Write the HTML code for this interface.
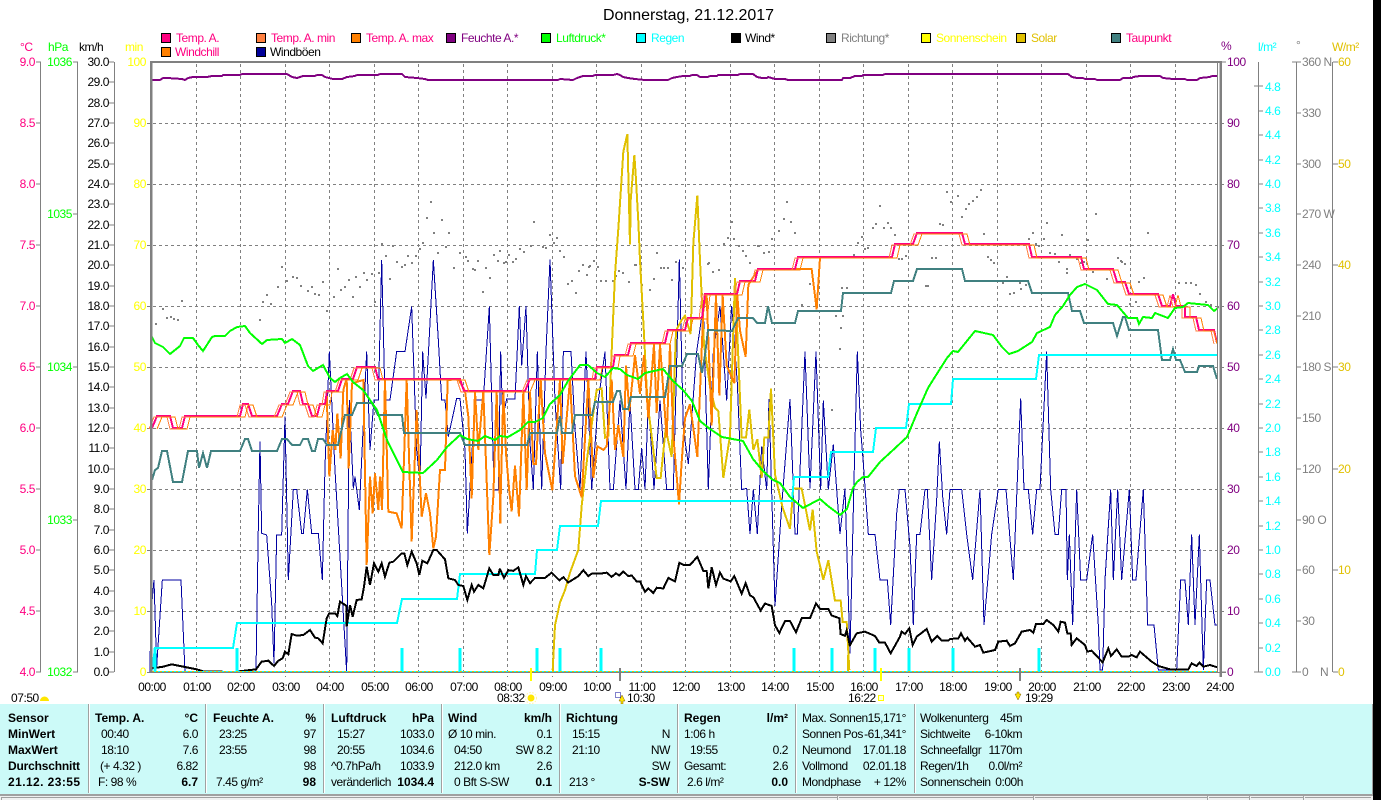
<!DOCTYPE html>
<html><head><meta charset="utf-8"><title>Donnerstag, 21.12.2017</title>
<style>
html,body{margin:0;padding:0;background:#fff;width:1381px;height:800px;overflow:hidden}
svg{display:block;position:absolute;left:0;top:0}
text{font-family:"Liberation Sans",sans-serif;font-size:12px;letter-spacing:-.45px;fill:#000}
.b text,text.b{font-weight:bold;letter-spacing:0}
.r text,text.r{text-anchor:end}
.l{fill:none;shape-rendering:crispEdges;vector-effect:non-scaling-stroke}
.l *{vector-effect:non-scaling-stroke}
</style></head><body>
<svg width="1381" height="800" viewBox="0 0 1381 800" xmlns="http://www.w3.org/2000/svg">
<rect width="1381" height="800" fill="#fff"/>
<rect x="1373" width="8" height="800" fill="#000"/>

<text x="603" y="20" style="font-size:16px;letter-spacing:0" textLength="171">Donnerstag, 21.12.2017</text>

<!-- legend -->
<g stroke="#000" shape-rendering="crispEdges">
<rect x="161.5" y="33.5" width="9" height="9" fill="#FF0080"/>
<rect x="256.5" y="33.5" width="9" height="9" fill="#FF8040"/>
<rect x="351.5" y="33.5" width="9" height="9" fill="#FF8000"/>
<rect x="446.5" y="33.5" width="9" height="9" fill="#800080"/>
<rect x="541.5" y="33.5" width="9" height="9" fill="#00FF00"/>
<rect x="636.5" y="33.5" width="9" height="9" fill="#00FFFF"/>
<rect x="731.5" y="33.5" width="9" height="9" fill="#000"/>
<rect x="826.5" y="33.5" width="9" height="9" fill="#808080"/>
<rect x="921.5" y="33.5" width="9" height="9" fill="#FFFF00"/>
<rect x="1016.5" y="33.5" width="9" height="9" fill="#E0C000"/>
<rect x="1111.5" y="33.5" width="9" height="9" fill="#408080"/>
<rect x="161.5" y="47.5" width="9" height="9" fill="#FF8000"/>
<rect x="256.5" y="47.5" width="9" height="9" fill="#000099"/>
</g>
<g>
<text x="176" y="42" style="fill:#FF0080">Temp. A.</text>
<text x="271" y="42" style="fill:#FF0080">Temp. A. min</text>
<text x="366" y="42" style="fill:#FF0080">Temp. A. max</text>
<text x="461" y="42" style="fill:#800080">Feuchte A.*</text>
<text x="556" y="42" style="fill:#00FF00">Luftdruck*</text>
<text x="651" y="42" style="fill:#00FFFF">Regen</text>
<text x="745" y="42">Wind*</text>
<text x="841" y="42" style="fill:#808080">Richtung*</text>
<text x="936" y="42" style="fill:#FFFF00">Sonnenschein</text>
<text x="1031" y="42" style="fill:#E0C000">Solar</text>
<text x="1126" y="42" style="fill:#FF0080">Taupunkt</text>
<text x="175" y="56" style="fill:#FF0080">Windchill</text>
<text x="270" y="56">Windböen</text>
</g>

<!-- left axis headers -->
<text x="20" y="51" style="fill:#FF0080">°C</text>
<text x="48" y="51" style="fill:#00FF00">hPa</text>
<text x="79" y="51">km/h</text>
<text x="125" y="51" style="fill:#FFFF00">min</text>
<text x="1221" y="50" style="fill:#800080">%</text>
<text x="1258" y="51" style="fill:#00FFFF">l/m²</text>
<text x="1296" y="49" style="fill:#808080">°</text>
<text x="1332" y="51" style="fill:#E0C000">W/m²</text>

<!-- axis lines + ticks -->
<g class="l" stroke="#808080" stroke-width="1">
<path d="M40.5 62V672M77.5 62V672M114.5 62V672M1258.5 62V672M1296.5 62V672M1332.5 62V672"/>
<path d="M36 62h5M36 123h5M36 184h5M36 245h5M36 306h5M36 367h5M36 428h5M36 489h5M36 550h5M36 611h5M36 672h5"/>
<path d="M73 62h5M73 214h5M73 367h5M73 520h5M73 672h5"/>
<path d="M109 62h5M109 82h5M109 103h5M109 123h5M109 143h5M109 164h5M109 184h5M109 204h5M109 225h5M109 245h5M109 265h5M109 286h5M109 306h5M109 326h5M109 347h5M109 367h5M109 387h5M109 408h5M109 428h5M109 448h5M109 469h5M109 489h5M109 509h5M109 530h5M109 550h5M109 570h5M109 591h5M109 611h5M109 631h5M109 652h5M109 672h5"/>
<path d="M1254 86h9M1258 111h5M1258 135h5M1258 160h5M1258 184h5M1258 208h5M1258 233h5M1258 257h5M1258 282h5M1258 306h5M1258 330h5M1258 355h5M1258 379h5M1258 404h5M1258 428h5M1258 452h5M1258 477h5M1258 501h5M1258 526h5M1258 550h5M1258 574h5M1258 599h5M1258 623h5M1258 648h5M1254 672h9"/>
<path d="M1292 62h9M1296 113h5M1296 164h5M1296 214h5M1296 265h5M1296 316h5M1296 367h5M1296 418h5M1296 469h5M1296 520h5M1296 570h5M1296 621h5M1292 672h9"/>
<path d="M1333 62h5M1333 164h5M1333 265h5M1333 367h5M1333 469h5M1333 570h5M1333 672h5"/>
<path d="M1220 62h6M1220 672h6"/>
</g>

<!-- axis labels -->
<g class="r" style="fill:#FF0080">
<text x="35" y="66" style="fill:#FF0080">9.0</text><text x="35" y="127" style="fill:#FF0080">8.5</text><text x="35" y="188" style="fill:#FF0080">8.0</text><text x="35" y="249" style="fill:#FF0080">7.5</text><text x="35" y="310" style="fill:#FF0080">7.0</text><text x="35" y="371" style="fill:#FF0080">6.5</text><text x="35" y="432" style="fill:#FF0080">6.0</text><text x="35" y="493" style="fill:#FF0080">5.5</text><text x="35" y="554" style="fill:#FF0080">5.0</text><text x="35" y="615" style="fill:#FF0080">4.5</text><text x="35" y="676" style="fill:#FF0080">4.0</text>
<text x="72" y="66" style="fill:#00FF00">1036</text><text x="72" y="218" style="fill:#00FF00">1035</text><text x="72" y="371" style="fill:#00FF00">1034</text><text x="72" y="524" style="fill:#00FF00">1033</text><text x="72" y="676" style="fill:#00FF00">1032</text>
<text x="109" y="66">30.0</text><text x="109" y="86">29.0</text><text x="109" y="107">28.0</text><text x="109" y="127">27.0</text><text x="109" y="147">26.0</text><text x="109" y="168">25.0</text><text x="109" y="188">24.0</text><text x="109" y="208">23.0</text><text x="109" y="229">22.0</text><text x="109" y="249">21.0</text><text x="109" y="269">20.0</text><text x="109" y="290">19.0</text><text x="109" y="310">18.0</text><text x="109" y="330">17.0</text><text x="109" y="351">16.0</text><text x="109" y="371">15.0</text><text x="109" y="391">14.0</text><text x="109" y="412">13.0</text><text x="109" y="432">12.0</text><text x="109" y="452">11.0</text><text x="109" y="473">10.0</text><text x="109" y="493">9.0</text><text x="109" y="513">8.0</text><text x="109" y="534">7.0</text><text x="109" y="554">6.0</text><text x="109" y="574">5.0</text><text x="109" y="595">4.0</text><text x="109" y="615">3.0</text><text x="109" y="635">2.0</text><text x="109" y="656">1.0</text><text x="109" y="676">0.0</text>
<text x="146" y="66" style="fill:#FFFF00">100</text><text x="146" y="127" style="fill:#FFFF00">90</text><text x="146" y="188" style="fill:#FFFF00">80</text><text x="146" y="249" style="fill:#FFFF00">70</text><text x="146" y="310" style="fill:#FFFF00">60</text><text x="146" y="371" style="fill:#FFFF00">50</text><text x="146" y="432" style="fill:#FFFF00">40</text><text x="146" y="493" style="fill:#FFFF00">30</text><text x="146" y="554" style="fill:#FFFF00">20</text><text x="146" y="615" style="fill:#FFFF00">10</text><text x="146" y="676" style="fill:#FFFF00">0</text>
</g>
<g style="fill:#800080">
<text x="1227" y="66" style="fill:#800080">100</text><text x="1227" y="127" style="fill:#800080">90</text><text x="1227" y="188" style="fill:#800080">80</text><text x="1227" y="249" style="fill:#800080">70</text><text x="1227" y="310" style="fill:#800080">60</text><text x="1227" y="371" style="fill:#800080">50</text><text x="1227" y="432" style="fill:#800080">40</text><text x="1227" y="493" style="fill:#800080">30</text><text x="1227" y="554" style="fill:#800080">20</text><text x="1227" y="615" style="fill:#800080">10</text><text x="1227" y="676" style="fill:#800080">0</text>
</g>
<g>
<text x="1265" y="91" style="fill:#00FFFF">4.8</text><text x="1265" y="115" style="fill:#00FFFF">4.6</text><text x="1265" y="139" style="fill:#00FFFF">4.4</text><text x="1265" y="164" style="fill:#00FFFF">4.2</text><text x="1265" y="188" style="fill:#00FFFF">4.0</text><text x="1265" y="212" style="fill:#00FFFF">3.8</text><text x="1265" y="237" style="fill:#00FFFF">3.6</text><text x="1265" y="261" style="fill:#00FFFF">3.4</text><text x="1265" y="286" style="fill:#00FFFF">3.2</text><text x="1265" y="310" style="fill:#00FFFF">3.0</text><text x="1265" y="334" style="fill:#00FFFF">2.8</text><text x="1265" y="359" style="fill:#00FFFF">2.6</text><text x="1265" y="383" style="fill:#00FFFF">2.4</text><text x="1265" y="408" style="fill:#00FFFF">2.2</text><text x="1265" y="432" style="fill:#00FFFF">2.0</text><text x="1265" y="456" style="fill:#00FFFF">1.8</text><text x="1265" y="481" style="fill:#00FFFF">1.6</text><text x="1265" y="505" style="fill:#00FFFF">1.4</text><text x="1265" y="530" style="fill:#00FFFF">1.2</text><text x="1265" y="554" style="fill:#00FFFF">1.0</text><text x="1265" y="578" style="fill:#00FFFF">0.8</text><text x="1265" y="603" style="fill:#00FFFF">0.6</text><text x="1265" y="627" style="fill:#00FFFF">0.4</text><text x="1265" y="652" style="fill:#00FFFF">0.2</text><text x="1265" y="676" style="fill:#00FFFF">0.0</text>
<text x="1302" y="66" style="fill:#808080">360 N</text><text x="1302" y="117" style="fill:#808080">330</text><text x="1302" y="168" style="fill:#808080">300</text><text x="1302" y="218" style="fill:#808080">270 W</text><text x="1302" y="269" style="fill:#808080">240</text><text x="1302" y="320" style="fill:#808080">210</text><text x="1302" y="371" style="fill:#808080">180 S</text><text x="1302" y="422" style="fill:#808080">150</text><text x="1302" y="473" style="fill:#808080">120</text><text x="1302" y="524" style="fill:#808080">90 O</text><text x="1302" y="574" style="fill:#808080">60</text><text x="1302" y="625" style="fill:#808080">30</text><text x="1302" y="676" style="fill:#808080">0</text><text x="1320" y="676" style="fill:#808080">N</text>
<text x="1338" y="66" style="fill:#E0C000">60</text><text x="1338" y="168" style="fill:#E0C000">50</text><text x="1338" y="269" style="fill:#E0C000">40</text><text x="1338" y="371" style="fill:#E0C000">30</text><text x="1338" y="473" style="fill:#E0C000">20</text><text x="1338" y="574" style="fill:#E0C000">10</text><text x="1338" y="676" style="fill:#E0C000">0</text>
</g>

<!-- grid -->
<g class="l" stroke="#808080" stroke-width="1" stroke-dasharray="3 3">
<path d="M147 123.5H1226M147 184.5H1226M147 245.5H1226M147 306.5H1226M147 367.5H1226M147 428.5H1226M147 489.5H1226M147 550.5H1226M147 611.5H1226"/>
<path d="M196.5 64V677M240.5 64V677M285.5 64V677M329.5 64V677M374.5 64V677M418.5 64V677M463.5 64V677M507.5 64V677M552.5 64V677M596.5 64V677M641.5 64V677M685.5 64V677M730.5 64V677M774.5 64V677M819.5 64V677M863.5 64V677M908.5 64V677M952.5 64V677M997.5 64V677M1041.5 64V677M1086.5 64V677M1130.5 64V677M1175.5 64V677"/>
</g>

<!-- direction dots -->
<path class="l" stroke="#808080" stroke-width="2" d="M430 202h2M426 218h2M441 220h2M433 233h2M448 233h2M422 243h2M381 244h2M392 246h2M445 247h2M419 249h2M385 256h2M407 256h2M415 256h2M437 253h2M459 253h2M396 262h2M404 265h2M411 263h2M401 267h2M281 267h2M337 269h2M453 268h2M533 222h2M556 238h2M549 235h2M553 243h2M542 247h2M545 248h2M530 246h2M519 249h2M523 252h2M508 255h2M499 251h2M493 255h2M515 259h2M512 262h2M503 263h2M497 261h2M465 257h2M467 261h2M477 261h2M485 268h2M472 269h2M559 251h2M563 257h2M593 261h2M582 265h2M588 267h2M597 267h2M634 265h2M656 253h2M663 268h2M667 268h2M682 268h2M708 263h2M731 222h2M727 238h2M733 239h2M723 244h2M742 251h2M745 256h2M749 263h2M758 246h2M771 239h2M768 252h2M763 253h2M778 231h2M783 219h2M786 202h2M790 222h2M794 233h2M853 255h2M857 243h2M861 237h2M864 249h2M867 248h2M872 228h2M875 224h2M879 206h2M883 228h2M887 223h2M890 228h2M894 235h2M905 256h2M898 259h2M901 259h2M946 192h2M957 196h2M980 190h2M976 197h2M972 201h2M968 204h2M950 202h2M965 209h2M961 217h2M983 234h2M939 224h2M942 225h2M931 258h2M935 258h2M1032 233h2M1028 239h2M1043 239h2M1035 244h2M1038 246h2M1046 223h2M1061 235h2M1095 214h2M1147 233h2M1087 240h2M1049 253h2M1054 254h2M987 257h2M990 260h2M993 263h2M1069 255h2M1076 259h2M1058 262h2M1080 263h2M1083 262h2M1117 258h2M1121 262h2M1124 264h2M1066 269h2M925 286h2M927 286h2M1002 283h2M1006 277h2M1019 283h2M1025 285h2M1020 289h2M1013 293h2M1009 294h2M1106 279h2M1143 278h2M1138 282h2M1178 283h2M1185 283h2M1190 283h2M1195 285h2M1199 294h2M1129 304h2M1135 302h2M1205 302h2M1210 305h2M1217 307h2M1066 273h2M1081 263h2M1092 272h2M1120 261h2M155 324h2M162 309h2M166 318h2M170 317h2M173 319h2M177 320h2M181 301h2M259 320h2M262 302h2M266 295h2M270 304h2M277 287h2M286 281h2M292 277h2M296 278h2M300 286h2M307 291h2M311 287h2M314 294h2M318 295h2M322 282h2M326 311h2M333 297h2M340 290h2M344 287h2M348 280h2M352 297h2M355 277h2M359 287h2M363 273h2M366 280h2M371 274h2M374 302h2M378 273h2M389 279h2M474 270h2M489 278h2M482 292h2M505 262h2M567 284h2M571 281h2M575 293h2M578 271h2M586 275h2M589 266h2M600 281h2M605 281h2M612 281h2M615 276h2M618 271h2M622 273h2M628 282h2M635 265h2M641 285h2M649 290h2M653 279h2M660 268h2M671 280h2M675 262h2M701 294h2M707 264h2M712 272h2M718 270h2M738 246h2M757 246h2M801 305h2M809 284h2M841 288h2M835 316h2M842 316h2M840 328h2M839 349h2M831 410h2M846 288h2"/>

<!-- gusts -->
<g class="l" stroke="#0000A0" stroke-width="1">
<polyline transform="translate(150 250) scale(.33333)" points="0,1266 2,1100 12,990 20,1250 37,990 93,990 105,1266 318,1266 325,830 330,575 335,850 350,855 365,1060 372,1240 380,855 395,855 405,500 415,990 430,718 440,718 455,850 460,850 472,718 485,850 505,850 517,990 525,650 538,305 545,450 555,660 590,1266 598,450 610,715 615,680 628,780 650,305 660,600 672,450 685,450 695,30 705,450 720,450 740,305 765,305 785,170 800,600 810,700 818,305 828,445 850,30 865,270 875,450 885,450 895,560 920,445 930,445 945,600 952,850 975,450 1000,450 1018,170 1032,720 1045,720 1052,305"/>
<polyline transform="translate(500 120) scale(.33333 .35088)" points="2,660 8,850 20,795 45,795 58,530 65,700 78,530 90,920 100,1053 112,660 125,1053 138,660 150,397 165,800 182,1053 190,660 213,660 225,880 240,1053 258,660 275,1053 295,800 315,660 330,1053 340,1053 360,800 378,1053 390,800 405,1053 415,1053 425,935 435,1053 445,800 462,1053 480,800 500,1053 520,1053 538,397 550,880 565,980 590,660 610,530 625,1053 640,660 660,530 680,800 695,530 712,750 725,1053 740,1050 750,1180 760,1053 772,1180 785,930 800,1053 807,795 825,1385 845,1100 870,795 885,1180 892,1180 915,660 930,1050 948,660 962,1053 970,800 985,1053 1000,925 1020,1180 1035,1050 1050,1520"/>
<polyline transform="translate(850 180) scale(.33333)" points="0,1420 12,900 22,515 32,750 40,850 55,1063 75,1063 90,1200 112,1200 122,1335 140,1000 148,928 165,928 180,1100 190,1335 200,1063 210,1063 225,928 232,928 245,1200 260,960 268,785 278,950 290,1063 300,928 335,928 350,1063 368,1200 390,928 402,1335 425,1063 445,928 468,928 490,1200 500,950 512,655 522,928 535,928 548,1063 560,928 570,928 590,515 602,928 615,1063 625,1063 635,928 648,928 652,1200 658,1063 668,1335 680,928 692,1200 710,1200 728,1063 745,1335 750,1470 758,1470 765,1200 782,928 790,1200 803,928 815,1200 838,928 848,1200 858,1200 880,928 893,1335 912,1335 925,1470 980,1470 992,1200 1005,1200 1015,1335 1025,1063 1035,1335 1048,1063 1060,1470 1070,1200 1080,1200 1095,1335 1102,1335"/>
</g>

<!-- solar -->
<polyline class="l" stroke="#E0C000" stroke-width="2" transform="translate(500 120) scale(.33333 .35088)" points="158,1568 165,1440 180,1375 195,1340 210,1290 235,1225 245,1100 262,960 285,800 290,770 305,765 315,905 325,900 335,660 345,440 355,310 370,90 382,40 390,355 392,230 403,100 408,170 415,290 420,400 432,610 442,800 460,940 470,1020 482,1020 497,880 515,960 528,600 545,570 555,558 572,610 580,350 592,215 600,400 612,640 630,760 645,820 655,830 670,1020 690,900 705,450 725,905 738,905 748,825 760,940 772,910 785,1020 793,905 805,905 813,765 825,1010 848,1105 870,1165 880,1050 905,1050 930,1170 938,1110 950,1230 970,1310 985,1255 1005,1370 1022,1370 1028,1430 1040,1430 1048,1568"/>

<!-- windchill -->
<g class="l" stroke="#FF8000" stroke-width="2">
<polyline transform="translate(150 250) scale(.33333)" points="530,430 538,680 548,540 556,600 562,490 572,625 580,420 590,385 596,655 606,400 640,390 650,945 660,680 668,790 675,670 685,780 690,680 696,780 705,390 715,785 740,790 755,835 770,390 785,875 800,480 815,800 828,730 840,790 850,895 858,860 870,660 885,660 893,390 925,388 945,423 955,500 965,745 975,425 985,600 1000,425 1010,690 1018,915 1030,740 1040,425 1052,820"/>
<polyline transform="translate(500 120) scale(.33333 .35088)" points="0,1150 10,775 18,950 28,1060 35,1115 45,985 57,1130 70,775 80,1055 90,775 100,980 108,980 122,740 135,950 157,1055 180,740 188,980 210,740 225,1015 245,1075 265,740 280,1020 292,930 310,940 320,930 335,740 345,940 355,870 370,960 378,700 388,830 405,670 420,780 432,670 445,850 462,640 470,835 480,640 500,905 510,640 520,900 537,1095 545,975 555,850 570,810 592,960 610,540 620,500 635,870 648,500 658,785 668,500 680,700 703,750 712,500 720,600 737,675 745,470 775,425 885,425 935,425 950,540 960,392 1000,392"/>
</g>

<!-- temp -->
<polyline class="l" stroke="#FF0080" stroke-width="2" points="152,428 157,416 170,416 173,428 182,428 185,416 240,416 243,404 248,404 252,416 277,416 282,404 288,404 293,391 300,391 303,404 308,404 312,416 317,416 320,404 325,404 327,391 338,391 342,379 353,379 357,367 375,367 378,379 460,379 464,391 525,391 530,379 595,379 597,367 613,367 615,355 628,355 631,343 665,343 668,330 685,330 688,318 702,318 705,294 737,294 740,281 755,281 758,269 795,269 798,257 892,257 895,244 913,244 917,233 962,233 965,244 1029,244 1032,257 1081,257 1084,269 1113,269 1117,282 1125,282 1129,294 1158,294 1162,306 1170,306 1173,294 1176,306 1185,306 1185,317 1196,317 1199,330 1214,330 1217,343"/>

<!-- temp min/max thin -->
<g class="l" stroke-width="1" fill="none">
<polyline stroke="#FF8040" transform="translate(-3 1)" points="152,428 157,416 170,416 173,428 182,428 185,416 240,416 243,404 248,404 252,416 277,416 282,404 288,404 293,391 300,391 303,404 308,404 312,416 317,416 320,404 325,404 327,391 338,391 342,379 353,379 357,367 375,367 378,379 460,379 464,391 525,391 530,379 595,379 597,367 613,367 615,355 628,355 631,343 665,343 668,330 685,330 688,318 702,318 705,294 737,294 740,281 755,281 758,269 795,269 798,257 892,257 895,244 913,244 917,233 962,233 965,244 1029,244 1032,257 1081,257 1084,269 1113,269 1117,282 1125,282 1129,294 1158,294 1162,306 1170,306 1173,294 1176,306 1185,306 1185,317 1196,317 1199,330 1214,330 1217,343"/>
<polyline stroke="#FF8000" transform="translate(5 1)" points="152,428 157,416 170,416 173,428 182,428 185,416 240,416 243,404 248,404 252,416 277,416 282,404 288,404 293,391 300,391 303,404 308,404 312,416 317,416 320,404 325,404 327,391 338,391 342,379 353,379 357,367 375,367 378,379 460,379 464,391 525,391 530,379 595,379 597,367 613,367 615,355 628,355 631,343 665,343 668,330 685,330 688,318 702,318 705,294 737,294 740,281 755,281 758,269 795,269 798,257 892,257 895,244 913,244 917,233 962,233 965,244 1029,244 1032,257 1081,257 1084,269 1113,269 1117,282 1125,282 1129,294 1158,294 1162,306 1170,306 1173,294 1176,306 1185,306 1185,317 1196,317 1199,330 1209,330 1212,343"/>
</g>

<!-- dew point -->
<polyline class="l" stroke="#408080" stroke-width="2" points="152,480 155,470 158,468 162,451 167,451 173,482 182,482 188,451 197,451 199,468 203,453 207,468 211,451 240,451 245,439 248,439 252,451 277,451 282,439 287,439 292,445 300,445 303,439 308,439 312,451 315,451 318,439 323,439 327,445 338,445 345,415 352,415 357,403 372,403 378,415 402,415 404,433 460,433 465,445 527,445 530,433 557,433 560,416 562,433 572,433 575,415 592,415 595,402 613,402 617,391 620,391 623,409 628,409 631,397 665,397 670,366 682,366 687,354 698,354 702,373 705,355 708,330 732,331 738,318 753,318 757,323 765,323 768,306 772,323 795,323 798,311 841,311 843,293 891,293 894,281 913,281 917,269 962,269 965,281 1028,281 1032,293 1068,293 1072,311 1080,311 1084,323 1113,323 1117,336 1123,317 1125,317 1129,330 1158,330 1162,360 1170,360 1173,349 1176,360 1180,360 1185,372 1197,372 1199,366 1213,366 1217,379"/>

<!-- rain -->
<polyline class="l" stroke="#00FFFF" stroke-width="2" points="152,670 155,648 233,648 237,623 397,623 402,599 457,599 460,574 535,574 537,550 557,550 560,526 598,526 601,501 792,501 794,477 828,477 831,452 873,452 876,428 906,428 909,404 951,404 953,379 1036,379 1039,355 1217,355"/>

<!-- pressure -->
<polyline class="l" stroke="#00FF00" stroke-width="2" points="152,337 155,343 163,347 170,354 180,346 184,338 193,338 198,345 203,351 212,337 215,336 225,336 230,331 237,327 245,326 250,333 262,344 267,340 282,339 285,343 292,339 300,345 308,366 313,371 323,365 330,378 335,382 340,378 347,374 353,382 363,390 377,410 387,440 403,472 423,473 437,460 447,447 460,435 467,439 478,441 485,436 495,440 500,436 508,437 520,430 528,422 535,422 543,418 550,404 560,395 568,381 580,365 588,365 597,373 605,377 613,368 620,369 627,375 638,379 645,373 663,369 673,381 683,390 692,401 700,421 710,429 722,437 743,441 753,459 763,471 773,480 780,483 790,497 803,508 820,499 828,506 840,515 847,509 853,488 857,482 863,477 868,477 880,462 892,451 907,437 917,413 928,388 933,380 947,358 953,351 958,352 975,331 993,335 1002,347 1009,354 1018,351 1032,342 1037,333 1050,327 1055,315 1063,306 1070,295 1077,287 1085,284 1097,290 1108,304 1117,305 1128,318 1137,318 1139,324 1143,317 1152,318 1155,313 1168,318 1175,308 1183,307 1188,303 1208,305 1214,311 1218,308"/>

<!-- wind -->
<g class="l" stroke="#000" stroke-width="2">
<polyline transform="translate(150 250) scale(.33333)" points="5,1255 40,1250 65,1243 100,1250 140,1258 160,1264 250,1266 318,1258 335,1235 355,1232 372,1248 385,1232 398,1225 405,1205 415,1213 425,1152 440,1157 460,1155 480,1140 495,1163 505,1165 518,1180 530,1105 538,1090 555,1090 562,1098 570,1055 590,1068 590,1130 600,1065 608,1100 620,1050 635,1048 642,1010 650,950 660,1005 672,940 685,965 695,940 705,980 718,938 730,935 755,910 763,910 772,945 785,905 800,940 808,975 817,932 832,940 850,900 860,900 885,928 895,985 915,990 925,1005 940,1008 952,1050 965,1005 972,1025 985,1005 1000,1015 1018,955 1030,975 1045,975 1050,955"/>
<polyline transform="translate(500 120) scale(.33333 .35088)" points="0,1280 12,1305 25,1283 40,1285 55,1275 70,1325 78,1300 90,1320 105,1305 135,1305 155,1290 178,1312 190,1303 205,1318 235,1300 250,1283 265,1300 275,1293 300,1293 320,1290 335,1302 348,1292 358,1298 370,1287 385,1300 395,1298 410,1315 420,1315 435,1345 445,1335 460,1348 470,1333 490,1335 505,1305 525,1315 538,1262 550,1268 570,1268 592,1245 610,1285 620,1285 625,1335 635,1275 648,1325 660,1290 670,1307 692,1315 703,1300 725,1350 737,1320 750,1355 760,1360 782,1398 795,1378 815,1385 825,1440 838,1462 855,1428 870,1428 888,1460 905,1420 930,1420 948,1378 960,1393 985,1393 995,1412 1018,1420 1022,1465 1035,1470 1040,1455 1050,1500"/>
<polyline transform="translate(850 180) scale(.33333)" points="0,1395 20,1360 45,1355 75,1368 88,1388 105,1388 122,1420 150,1370 155,1355 165,1362 178,1345 188,1395 200,1370 230,1347 245,1385 262,1368 275,1382 295,1382 300,1377 325,1375 333,1360 345,1382 352,1373 375,1400 390,1395 400,1418 435,1410 445,1385 470,1382 480,1398 495,1390 515,1355 540,1350 550,1358 558,1332 580,1332 590,1320 610,1335 625,1355 632,1325 645,1328 652,1360 662,1360 665,1395 680,1375 705,1395 712,1415 725,1412 758,1447 775,1405 783,1428 800,1408 815,1430 835,1430 845,1425 860,1432 870,1415 905,1445 925,1458 960,1468 1015,1468 1025,1450 1040,1458 1048,1448 1060,1460 1080,1455 1102,1462"/>
</g>

<!-- humidity -->
<polyline class="l" stroke="#800080" stroke-width="2" points="152,80 160,80 163,78 167,78 182,79 185,80 188,78 193,77 200,77 203,77 207,77 212,76 222,76 223,75 240,75 242,74 287,74 292,77 297,78 303,76 315,76 317,75 322,75 325,77 333,79 342,79 347,77 355,76 357,75 378,75 380,74 402,74 405,77 417,78 425,79 428,80 558,80 560,79 573,80 577,78 583,76 593,76 595,75 613,75 617,74 620,75 623,77 628,78 635,79 645,80 668,80 672,78 677,77 683,76 690,76 692,75 697,75 700,77 708,77 710,76 717,76 718,75 738,75 740,74 753,74 757,77 762,78 767,78 768,77 775,79 785,79 788,80 842,80 843,78 850,78 855,76 862,76 863,75 883,75 885,74 1068,74 1072,77 1077,78 1083,78 1085,79 1095,79 1097,80 1120,80 1123,78 1132,78 1133,77 1140,76 1160,76 1163,78 1173,79 1185,79 1187,80 1197,80 1200,78 1210,77 1212,76 1217,76"/>

<!-- rain ticks -->
<g class="l" stroke="#00FFFF" stroke-width="3">
<path d="M155 648V672M237 648V672M402 648V672M460 648V672M537 648V672M560 648V672M601 648V672M794 648V672M832 648V672M875 648V672M909 648V672M953 648V672M1039 648V672"/>
</g>
<g class="l">
<path d="M553 661V672M848 655V672" stroke="#E0C000" stroke-width="2"/>
<path d="M152 671.5H1218" stroke="#00FFFF"/>
<path d="M152 671.5H1218" stroke="#E0C000" stroke-dasharray="2 2"/>
<path d="M147 672.5H1226" stroke="#808080"/>
<path d="M531 668V681M881 668V681" stroke="#FFFF00" stroke-width="2"/>
<path d="M620 668V681M1020 668V681" stroke="#808080" stroke-width="2"/>
</g>

<!-- frame -->
<g class="l" stroke="#808080">
<path d="M150 62H1222" stroke-width="2"/>
<path d="M151 62V672M1220.5 62V677" stroke-width="2.5"/>
<path d="M1217.5 62V672" stroke-width="1"/>
</g>

<!-- time labels -->
<g>
<text x="152" y="691" text-anchor="middle">00:00</text><text x="197" y="691" text-anchor="middle">01:00</text><text x="241" y="691" text-anchor="middle">02:00</text><text x="286" y="691" text-anchor="middle">03:00</text><text x="330" y="691" text-anchor="middle">04:00</text><text x="375" y="691" text-anchor="middle">05:00</text><text x="419" y="691" text-anchor="middle">06:00</text><text x="464" y="691" text-anchor="middle">07:00</text><text x="508" y="691" text-anchor="middle">08:00</text><text x="553" y="691" text-anchor="middle">09:00</text><text x="597" y="691" text-anchor="middle">10:00</text><text x="642" y="691" text-anchor="middle">11:00</text><text x="686" y="691" text-anchor="middle">12:00</text><text x="731" y="691" text-anchor="middle">13:00</text><text x="775" y="691" text-anchor="middle">14:00</text><text x="820" y="691" text-anchor="middle">15:00</text><text x="864" y="691" text-anchor="middle">16:00</text><text x="909" y="691" text-anchor="middle">17:00</text><text x="953" y="691" text-anchor="middle">18:00</text><text x="998" y="691" text-anchor="middle">19:00</text><text x="1042" y="691" text-anchor="middle">20:00</text><text x="1087" y="691" text-anchor="middle">21:00</text><text x="1131" y="691" text-anchor="middle">22:00</text><text x="1176" y="691" text-anchor="middle">23:00</text><text x="1220" y="691" text-anchor="middle">24:00</text>
</g>
<text x="11" y="702">07:50</text>
<path d="M40 701a4.5 4.5 0 0 1 9 0z" fill="#FFE600"/>
<text x="497" y="702">08:32</text>
<circle cx="531" cy="698" r="3.5" fill="#FFE600"/><circle cx="531" cy="698" r="5.5" fill="none" stroke="#FFF4A0" stroke-width="1" stroke-dasharray="1.5 1.5"/>
<rect x="615.5" y="692.5" width="5" height="5" fill="none" stroke="#000099" stroke-dasharray="1 1"/>
<path d="M622 695l-3 6h2v3h2v-3h2z" fill="#FFE600" stroke="#806000" stroke-width=".5"/>
<text x="627" y="702">10:30</text>
<text x="848" y="702">16:22</text>
<rect x="878.5" y="695.5" width="5" height="5" fill="#FFFFE0" stroke="#FFFF00"/>
<path d="M1018 700l-3-6h2v-2h2v2h2z" fill="#FFE600" stroke="#806000" stroke-width=".5"/>
<text x="1025" y="702">19:29</text>

<!-- panel -->
<rect x="0" y="704" width="1372" height="90" fill="#CCFAF8"/>
<path class="l" stroke="#A0A0A0" d="M88.5 704V793M205.5 704V793M323.5 704V793M441.5 704V793M559.5 704V793M677.5 704V793M795.5 704V793M914.5 704V793M1372.5 704V794"/>
<path class="l" stroke="#fff" d="M89.5 704V793M206.5 704V793M324.5 704V793M442.5 704V793M560.5 704V793M678.5 704V793M796.5 704V793M915.5 704V793"/>
<rect x="0" y="794" width="1373" height="2" fill="#A0A0A0"/>
<rect x="0" y="796" width="1373" height="4" fill="#F0F0F0"/>
<path class="l" stroke="#A0A0A0" d="M1.5 797V800M837.5 796V800M1033.5 796V800M1207.5 796V800M1249.5 796V800M1303.5 796V800"/>
<path class="l" stroke="#A0A0A0" d="M1 797.5H837M839 797.5H1033M1035 797.5H1207M1209 797.5H1249M1251 797.5H1303M1305 797.5H1371"/>

<g class="b">
<text x="8" y="722">Sensor</text><text x="8" y="738">MinWert</text><text x="8" y="754">MaxWert</text><text x="8" y="770" textLength="72">Durchschnitt</text><text x="8" y="786" textLength="72">21.12. 23:55</text>
<text x="95" y="722">Temp. A.</text><text x="213" y="722">Feuchte A.</text><text x="331" y="722">Luftdruck</text><text x="448" y="722">Wind</text><text x="566" y="722">Richtung</text><text x="684" y="722">Regen</text>
</g>
<g class="b r">
<text x="198" y="722">°C</text><text x="198" y="786">6.7</text>
<text x="316" y="722">%</text><text x="316" y="786">98</text>
<text x="434" y="722">hPa</text><text x="434" y="786">1034.4</text>
<text x="552" y="722">km/h</text><text x="552" y="786">0.1</text>
<text x="670" y="786">S-SW</text>
<text x="788" y="722">l/m²</text><text x="788" y="786">0.0</text>
</g>
<g>
<text x="101" y="738">00:40</text><text x="101" y="754">18:10</text><text x="100" y="770">(+ 4.32 )</text><text x="98" y="786">F: 98 %</text>
<text x="219" y="738">23:25</text><text x="219" y="754">23:55</text><text x="216" y="786">7.45 g/m²</text>
<text x="337" y="738">15:27</text><text x="337" y="754">20:55</text><text x="331" y="770">^0.7hPa/h</text><text x="331" y="786">veränderlich</text>
<text x="448" y="738">Ø 10 min.</text><text x="454" y="754">04:50</text><text x="454" y="770">212.0 km</text><text x="454" y="786">0 Bft S-SW</text>
<text x="572" y="738">15:15</text><text x="572" y="754">21:10</text><text x="569" y="786">213 °</text>
<text x="684" y="738">1:06 h</text><text x="690" y="754">19:55</text><text x="684" y="770">Gesamt:</text><text x="687" y="786">2.6 l/m²</text>
<text x="802" y="722">Max. Sonnen</text><text x="802" y="738">Sonnen Pos</text><text x="802" y="754">Neumond</text><text x="802" y="770">Vollmond</text><text x="802" y="786">Mondphase</text>
<text x="920" y="722">Wolkenunterg</text><text x="920" y="738">Sichtweite</text><text x="920" y="754">Schneefallgr</text><text x="920" y="770">Regen/1h</text><text x="920" y="786">Sonnenschein</text>
</g>
<g class="r">
<text x="198" y="738">6.0</text><text x="198" y="754">7.6</text><text x="198" y="770">6.82</text>
<text x="316" y="738">97</text><text x="316" y="754">98</text><text x="316" y="770">98</text>
<text x="434" y="738">1033.0</text><text x="434" y="754">1034.6</text><text x="434" y="770">1033.9</text>
<text x="552" y="738">0.1</text><text x="552" y="754">SW 8.2</text><text x="552" y="770">2.6</text>
<text x="670" y="738">N</text><text x="670" y="754">NW</text><text x="670" y="770">SW</text>
<text x="788" y="754">0.2</text><text x="788" y="770">2.6</text>
<text x="906" y="722">15,171°</text><text x="906" y="738">-61,341°</text><text x="906" y="754">17.01.18</text><text x="906" y="770">02.01.18</text><text x="906" y="786">+ 12%</text>
<text x="1022" y="722">45m</text><text x="1022" y="738">6-10km</text><text x="1022" y="754">1170m</text><text x="1022" y="770">0.0l/m²</text><text x="1023" y="786">0:00h</text>
</g>
</svg>
</body></html>
